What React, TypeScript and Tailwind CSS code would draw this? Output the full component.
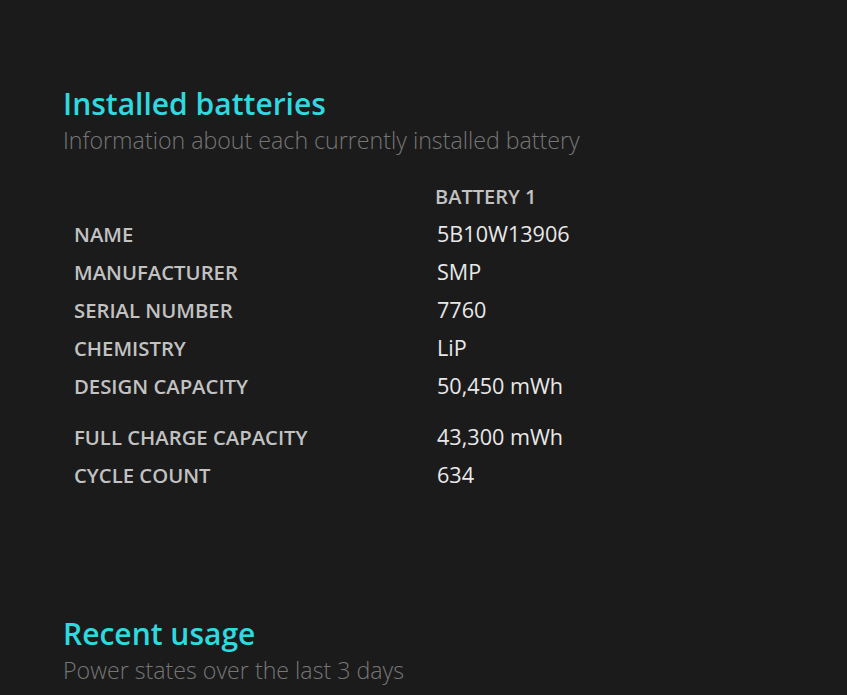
import React from "react";

const rows: [string, string, string][] = [
  ["NAME", "5B10W13906", "h-[38px]"],
  ["MANUFACTURER", "SMP", "h-[38px]"],
  ["SERIAL NUMBER", "7760", "h-[38px]"],
  ["CHEMISTRY", "LiP", "h-[38px]"],
  ["DESIGN CAPACITY", "50,450 mWh", "h-[51px]"],
  ["FULL CHARGE CAPACITY", "43,300 mWh", "h-[38px]"],
  ["CYCLE COUNT", "634", "h-[38px]"],
];

export default function App() {
  return (
    <div className="w-[847px] h-[695px] overflow-hidden bg-[#1b1b1b] pl-[63px] pt-[84px] font-['Open_Sans',sans-serif]">
      <h1 className="text-[30px] leading-[40px] font-semibold text-[#30d8df]">Installed batteries</h1>
      <p className="text-[23.2px] leading-[32px] font-light text-[#767676]">
        Information about each currently installed battery
      </p>
      <div className="mt-[23px] flex flex-col">
        <div className="flex h-[36px] items-center">
          <div className="w-[372px]" />
          <div className="text-[20px] font-semibold text-[#c2c2c2]">BATTERY 1</div>
        </div>
        {rows.map(([k, v, h]) => (
          <div key={k} className={`flex ${h} items-start`}>
            <div className="w-[374px] pl-[11px] pt-[7px] text-[20.3px] leading-[24px] font-semibold text-[#c2c2c2]">{k}</div>
            <div className="pt-[5px] text-[21.6px] leading-[28px] text-[#e8e8e8]">{v}</div>
          </div>
        ))}
      </div>
      <h1 className="mt-[120px] text-[30px] leading-[40px] font-semibold text-[#30d8df]">Recent usage</h1>
      <p className="text-[23.2px] leading-[32px] font-light text-[#767676]">Power states over the last 3 days</p>
    </div>
  );
}
